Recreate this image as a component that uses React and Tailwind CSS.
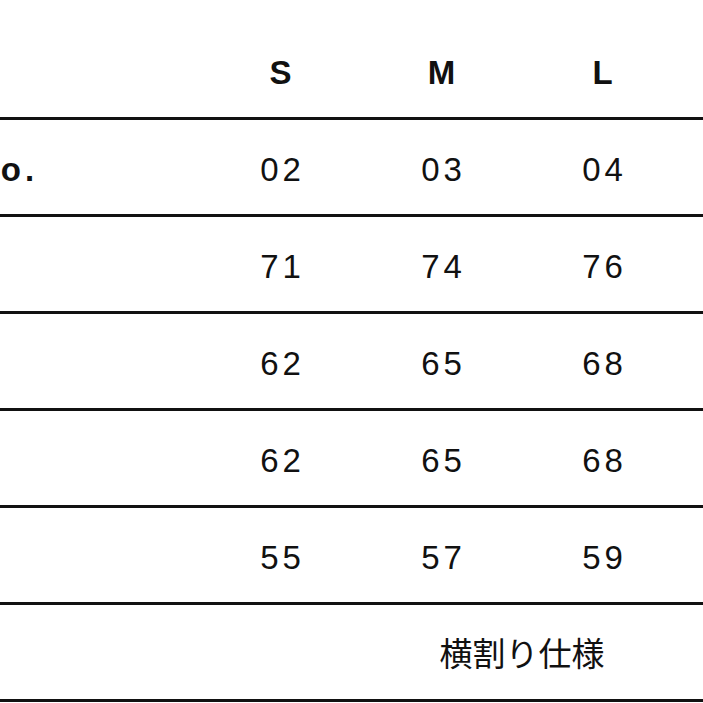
import React from "react";

const rows = [
  { label: "No.", values: ["02", "03", "04"] },
  { label: "", values: ["71", "74", "76"] },
  { label: "", values: ["62", "65", "68"] },
  { label: "", values: ["62", "65", "68"] },
  { label: "", values: ["55", "57", "59"] },
];

const grid = "grid grid-cols-[200px_161px_161px_161px]";

export default function App() {
  return (
    <div className="w-[703px] h-[703px] overflow-hidden bg-white text-[#111] font-['Liberation_Sans','Noto_Sans_CJK_JP',sans-serif]">
      {/* Header */}
      <div className={`${grid} h-[117px] pt-[56px] text-[33px] leading-none font-bold`}>
        <div />
        <div className="text-center">S</div>
        <div className="text-center">M</div>
        <div className="text-center">L</div>
      </div>

      {rows.map((row, i) => (
        <div key={i} className="border-t-[3px] border-[#111]">
          <div className={`${grid} h-[94px] items-center pt-1 text-[33px] leading-none`}>
            <div className="font-bold tracking-[4px] ml-[-27px] whitespace-nowrap">{row.label}</div>
            {row.values.map((v, j) => (
              <div key={j} className="text-center tracking-[4px] pl-[4px]">
                {v}
              </div>
            ))}
          </div>
        </div>
      ))}

      {/* Notes */}
      <div className="border-t-[3px] border-b-[3px] border-[#111]">
        <div className={`${grid} h-[94px] items-center text-[33px] leading-none`}>
          <div />
          <div />
          <div className="col-span-2 text-center font-['Noto_Sans_CJK_JP',sans-serif]">横割り仕様</div>
        </div>
      </div>
    </div>
  );
}
